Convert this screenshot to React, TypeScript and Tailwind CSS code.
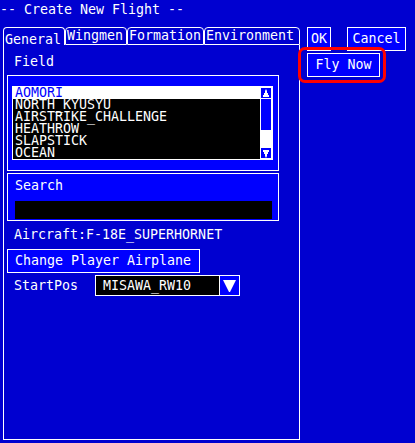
export default function App() {
  const items = ["AOMORI", "NORTH_KYUSYU", "AIRSTRIKE_CHALLENGE", "HEATHROW", "SLAPSTICK", "OCEAN"];
  return (
    <div className="w-[415px] h-[443px] bg-[#0000d0] text-white overflow-hidden text-[13.3px] leading-[16px] font-['DejaVu_Sans_Mono',monospace]">
      <div className="pt-[2px] h-[27px] whitespace-pre">-- Create New Flight --</div>
      <div className="flex">
        {/* Left panel */}
        <div className="ml-[3px] w-[297px] flex flex-col">
          <div className="flex h-[18px]">
            <div className="w-[62px] h-[18px] border-l border-t border-r border-white rounded-t-[4px] pl-[1px] pt-[4px] whitespace-pre">General</div>
            <div className="w-[62px] h-[18px] border border-white rounded-t-[4px] pl-[1px] whitespace-pre">Wingmen</div>
            <div className="w-[77px] h-[18px] border border-white rounded-t-[4px] pl-[1px] whitespace-pre">Formation</div>
            <div className="w-[96px] h-[18px] border border-white rounded-t-[4px] pl-[1px] whitespace-pre">Environment</div>
          </div>
          <div className="h-[395px] border-l border-r border-b border-white pl-[3px]">
            <div className="pl-[7px] pt-[9px]">Field</div>
            <div className="mt-[5px] w-[272px] h-[96px] border border-white bg-[#0000ff] pt-[10px] pl-[4px]">
              <div className="flex w-[261px] h-[74px] border border-white bg-black">
                <div className="flex-1 flex flex-col">
                  {items.map((it, i) => (
                    <div
                      key={it}
                      className={
                        i === 0
                          ? "h-[12px] leading-[12px] pl-[2px] bg-white text-[#0000ff] whitespace-pre"
                          : "h-[12px] leading-[12px] pl-[2px] text-white whitespace-pre"
                      }
                    >
                      {it}
                    </div>
                  ))}
                </div>
                <div className="w-[12px] bg-white flex flex-col">
                  <div className="h-[12px] bg-[#0000ff] border border-white flex items-center justify-center">
                    <svg width="8" height="9" viewBox="0 0 8 9" fill="white">
                      <path d="M4 0 L5 2 L5 4 L6 4 L6 6 L7 6 L7 8 L1 8 L1 6 L2 6 L2 4 L3 4 L3 2 Z" />
                    </svg>
                  </div>
                  <div className="h-[31px] mx-[1px] bg-[#0000ff]" />
                  <div className="flex-1" />
                  <div className="h-[12px] bg-[#0000ff] border border-white flex items-center justify-center">
                    <svg width="8" height="9" viewBox="0 0 8 9" fill="white">
                      <path d="M1 1 L7 1 L7 3 L6 3 L6 5 L5 5 L5 7 L4 9 L3 7 L3 5 L2 5 L2 3 L1 3 Z" />
                    </svg>
                  </div>
                </div>
              </div>
            </div>
            <div className="mt-[2px] w-[272px] h-[48px] border border-white bg-[#0000ff] pt-[4px] pl-[7px]">
              <div>Search</div>
              <div className="mt-[7px] w-[257px] h-[18px] bg-black" />
            </div>
            <div className="mt-[6px] pl-[7px] whitespace-pre">Aircraft:F-18E_SUPERHORNET</div>
            <div className="mt-[6px] w-[193px] h-[24px] border border-white bg-[#0000ff] pl-[7px] leading-[22px] whitespace-pre">
              Change Player Airplane
            </div>
            <div className="mt-[2px] flex items-center h-[21px]">
              <div className="w-[88px] pl-[7px]">StartPos</div>
              <div className="flex h-[21px]">
                <div className="w-[125px] h-[21px] border border-white bg-black pl-[7px] leading-[19px]">MISAWA_RW10</div>
                <div className="-ml-[1px] w-[21px] h-[21px] border border-white bg-[#0000ff] flex items-center justify-center">
                  <svg width="13" height="14" viewBox="0 0 13 14" fill="white">
                    <path d="M0 1 L13 1 L7 13 L6 13 Z" />
                  </svg>
                </div>
              </div>
            </div>
          </div>
        </div>
        {/* Right buttons */}
        <div className="ml-[7px] flex flex-col">
          <div className="flex gap-[16px]">
            <div className="w-[24px] h-[24px] border border-white bg-[#0000ff] flex items-center justify-center">OK</div>
            <div className="w-[59px] h-[24px] border border-white bg-[#0000ff] flex items-center justify-center">Cancel</div>
          </div>
          <div className="relative mt-[2px] w-[73px] h-[24px] border border-white bg-[#0000ff] flex items-center justify-center whitespace-pre">
            Fly Now
            <div className="absolute -left-[10px] -top-[7px] -right-[7px] -bottom-[7px] border-[3px] border-[#ff0000] rounded-[7px]" />
          </div>
        </div>
      </div>
    </div>
  );
}
